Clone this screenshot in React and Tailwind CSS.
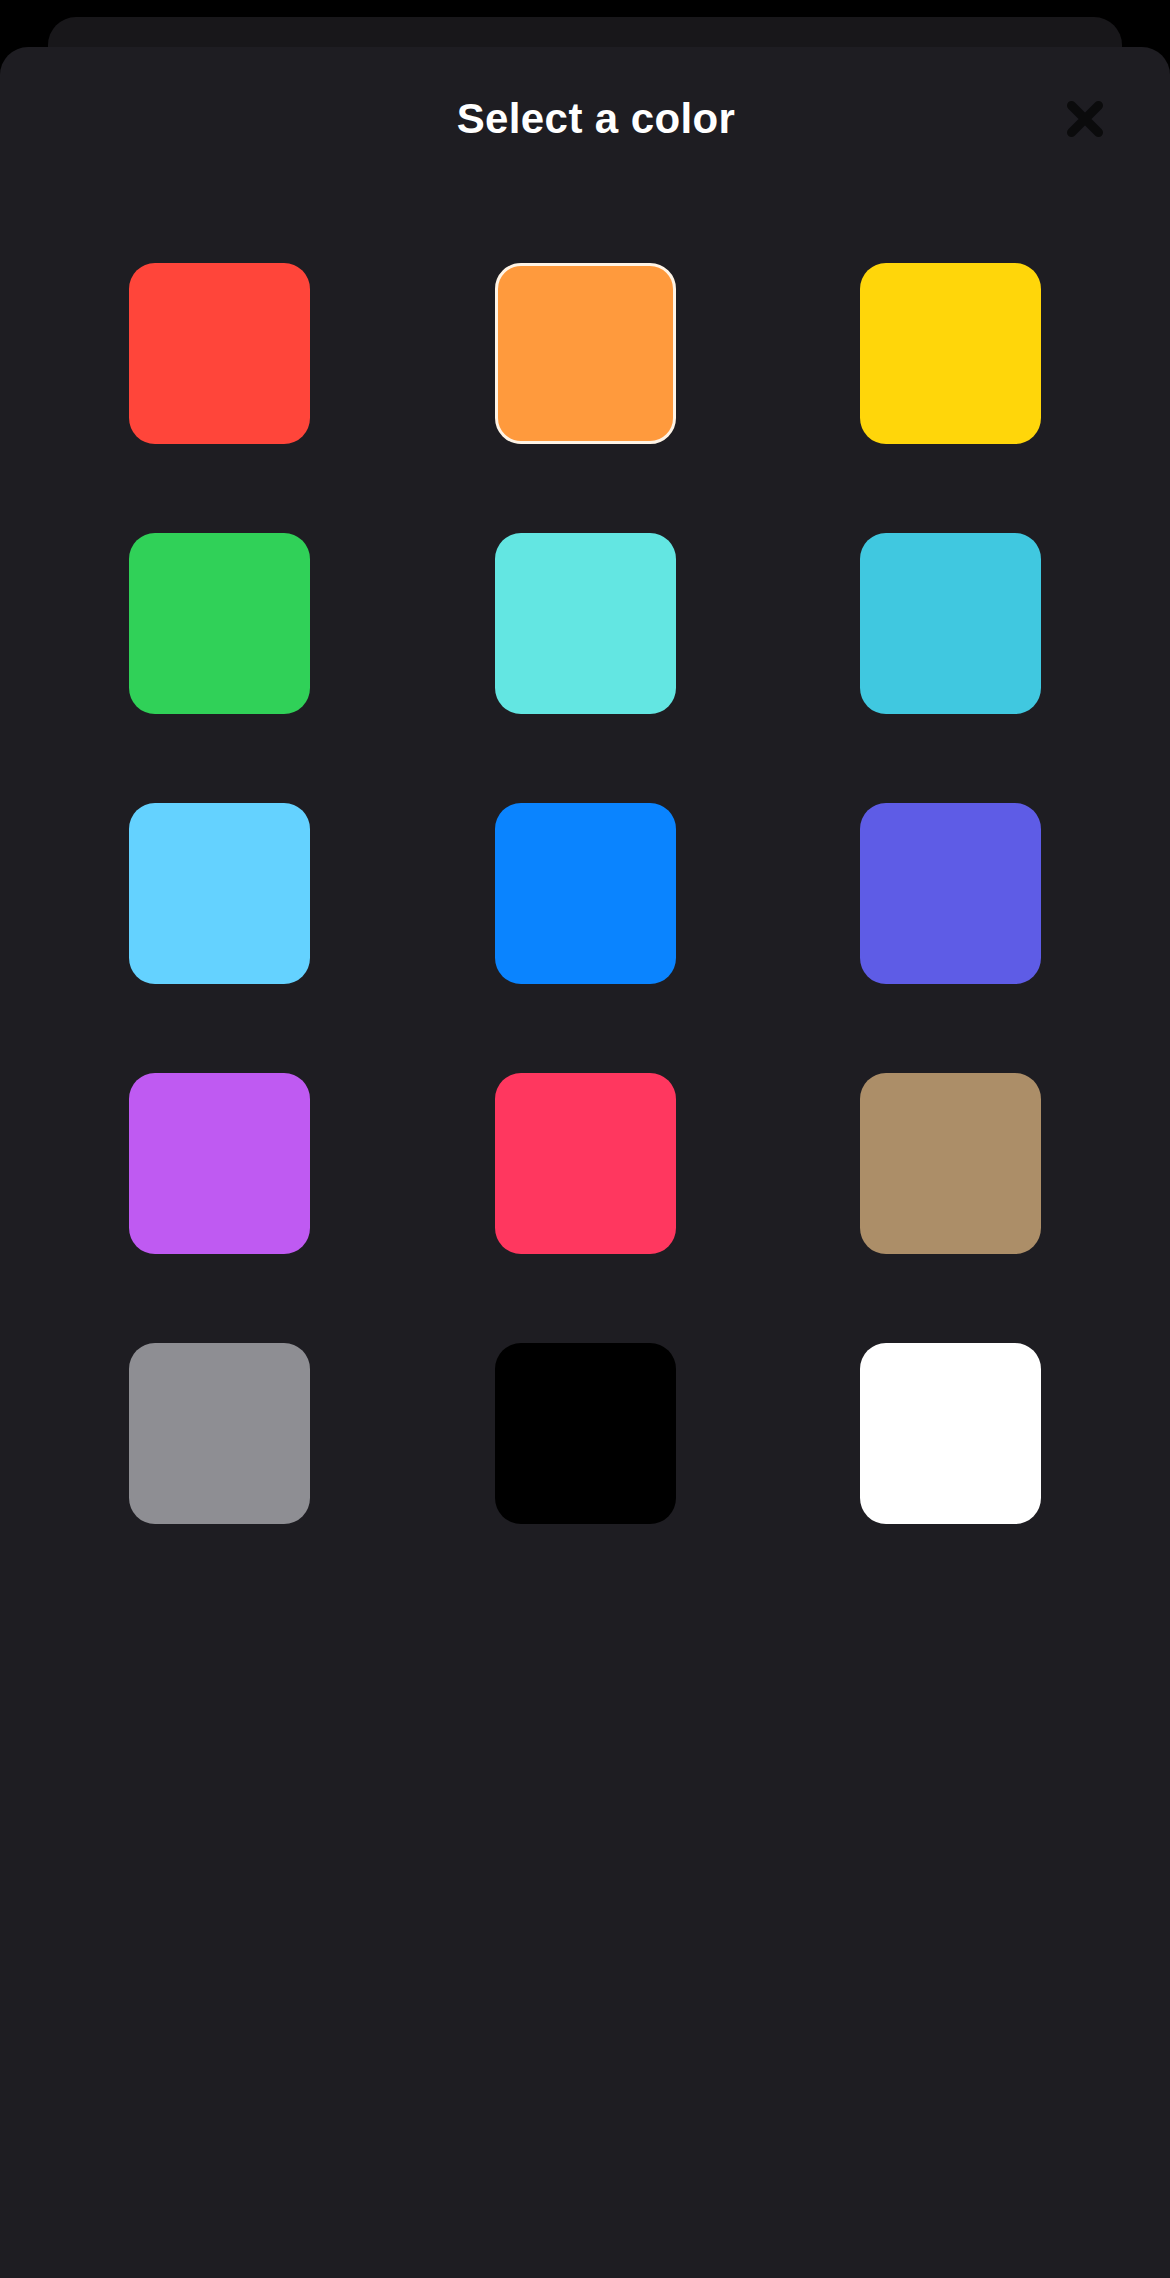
import React from "react";

const colors = [
  { c: "#ff453a" },
  { c: "#ff9a3d", selected: true },
  { c: "#ffd60a" },
  { c: "#30d158" },
  { c: "#63e6e2" },
  { c: "#40c8e0" },
  { c: "#64d2ff" },
  { c: "#0a84ff" },
  { c: "#5e5ce6" },
  { c: "#bf5af2" },
  { c: "#ff375f" },
  { c: "#ac8e68" },
  { c: "#8e8e93" },
  { c: "#000000" },
  { c: "#ffffff" },
];

export default function App() {
  const rows = [];
  for (let i = 0; i < colors.length; i += 3) rows.push(colors.slice(i, i + 3));
  return (
    <div
      className="min-h-[2278px] bg-black pt-[17px] flex flex-col"
      style={{ fontFamily: '"Liberation Sans", Arial, sans-serif' }}
    >
      <div className="mx-[48px] h-[30px] rounded-t-[28px] bg-[#18171a] shrink-0" />
      <div className="flex-1 rounded-t-[28px] bg-[#1e1d22] flex flex-col">
        <div className="grid grid-cols-[1fr_auto_1fr] items-center h-[144px]">
          <div />
          <h1 className="text-white font-bold text-[42px] leading-none tracking-[0.4px] pl-[22px]">
            Select a color
          </h1>
          <div className="flex justify-end pr-[67px]">
            <button aria-label="Close" className="w-[36px] h-[36px]">
              <svg width="36" height="36" viewBox="0 0 36 36">
                <path
                  d="M4.5 4.5 L31.5 31.5 M31.5 4.5 L4.5 31.5"
                  stroke="#0b0b0c"
                  strokeWidth="9"
                  strokeLinecap="round"
                  fill="none"
                />
              </svg>
            </button>
          </div>
        </div>
        <div className="pt-[72px] px-[129px] flex flex-col gap-[89px]">
          {rows.map((row, ri) => (
            <div key={ri} className="flex justify-between">
              {row.map((s, si) => (
                <button
                  key={si}
                  className={
                    s.selected
                      ? "w-[181px] h-[181px] rounded-[26px] border-[3px] border-[#fff4e6]"
                      : "w-[181px] h-[181px] rounded-[26px]"
                  }
                  style={{ backgroundColor: s.c }}
                />
              ))}
            </div>
          ))}
        </div>
      </div>
    </div>
  );
}
